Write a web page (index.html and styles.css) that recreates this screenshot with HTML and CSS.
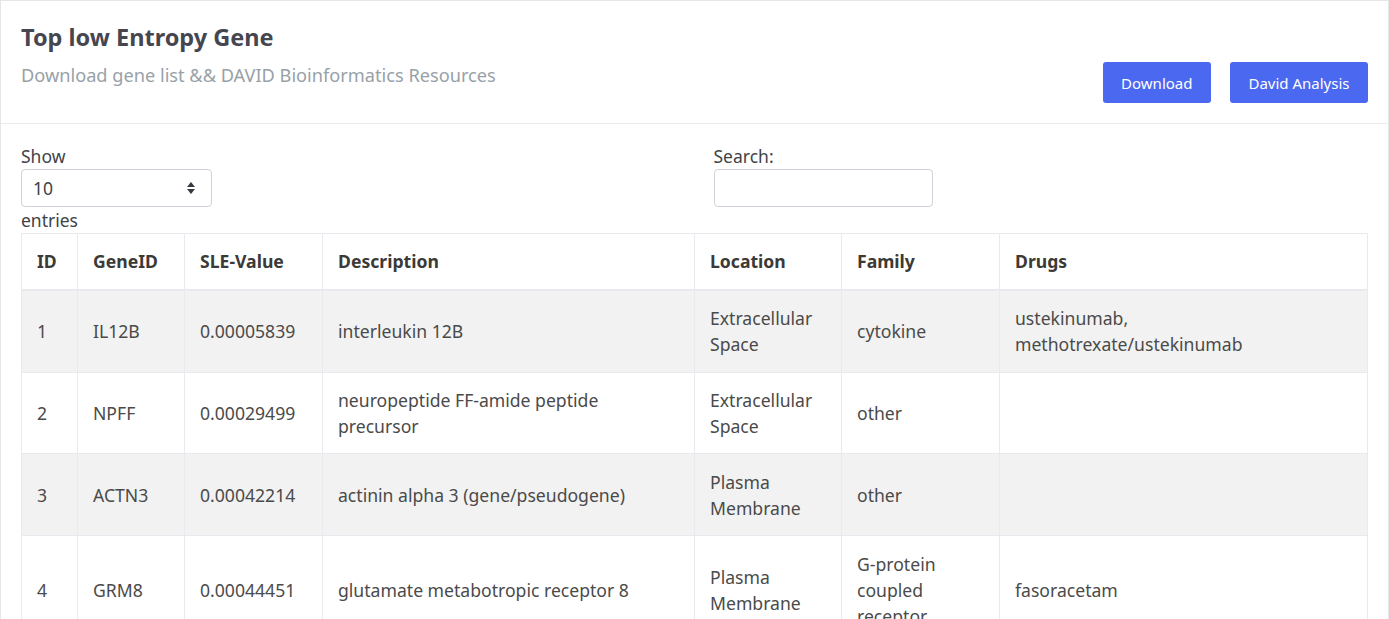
FILE: index.html
```html
<!DOCTYPE html>
<html lang="en">
<head>
    <meta charset="utf-8">
    <title>Top low Entropy Gene</title>
    <link rel="stylesheet" href="styles.css">
</head>
<body>
    <div class="card">
        <div class="card-header">
            <div class="card-titles">
                <h4 class="card-title">Top low Entropy Gene</h4>
                <p class="card-subtitle">Download gene list &amp;&amp; DAVID Bioinformatics Resources</p>
            </div>
            <div class="card-actions">
                <button class="btn" id="download">Download</button>
                <button class="btn" id="david">David Analysis</button>
            </div>
        </div>

        <div class="card-body">
            <div class="table-tools">
                <div class="tool">
                    <label>Show</label>
                    <div class="select-box">
                        <select id="pageSize">
                            <option>10</option>
                            <option>25</option>
                            <option>50</option>
                            <option>100</option>
                        </select>
                        <svg class="select-arrow" width="10" height="14" viewBox="0 0 10 14">
                            <path d="M5 1 L9 6 H1 Z" fill="#343a40"/>
                            <path d="M5 13 L9 8 H1 Z" fill="#343a40"/>
                        </svg>
                    </div>
                    <span>entries</span>
                </div>
                <div class="tool">
                    <label for="search">Search:</label>
                    <input type="search" id="search">
                </div>
            </div>

            <table class="gene-table">
                <colgroup>
                    <col style="width: 56px">
                    <col style="width: 107px">
                    <col style="width: 138px">
                    <col style="width: 372px">
                    <col style="width: 147px">
                    <col style="width: 158px">
                    <col>
                </colgroup>
                <thead>
                    <tr>
                        <th>ID</th>
                        <th>GeneID</th>
                        <th>SLE-Value</th>
                        <th>Description</th>
                        <th>Location</th>
                        <th>Family</th>
                        <th>Drugs</th>
                    </tr>
                </thead>
                <tbody id="geneRows"></tbody>
            </table>
        </div>
    </div>

    <script>
        const genes = [
            { id: 1, gene: 'IL12B', value: '0.00005839', desc: 'interleukin 12B', loc: 'Extracellular Space', family: 'cytokine', drugs: 'ustekinumab, methotrexate/ustekinumab' },
            { id: 2, gene: 'NPFF', value: '0.00029499', desc: 'neuropeptide FF-amide peptide precursor', loc: 'Extracellular Space', family: 'other', drugs: '' },
            { id: 3, gene: 'ACTN3', value: '0.00042214', desc: 'actinin alpha 3 (gene/pseudogene)', loc: 'Plasma Membrane', family: 'other', drugs: '' },
            { id: 4, gene: 'GRM8', value: '0.00044451', desc: 'glutamate metabotropic receptor 8', loc: 'Plasma Membrane', family: 'G-protein coupled receptor', drugs: 'fasoracetam' }
        ];

        const tbody = document.getElementById('geneRows');
        genes.forEach(function(g) {
            const tr = document.createElement('tr');
            [g.id, g.gene, g.value, g.desc, g.loc, g.family, g.drugs].forEach(function(v) {
                const td = document.createElement('td');
                td.textContent = v;
                tr.appendChild(td);
            });
            tbody.appendChild(tr);
        });
    </script>
</body>
</html>
```

FILE: styles.css
```css
body {
    margin: 0;
    font-family: "Noto Sans", "Open Sans", sans-serif;
    color: #495057;
    background-color: #ffffff;
}

.card {
    border: 1px solid #e6e6e6;
    border-bottom: none;
    background-color: #ffffff;
}

.card-header {
    display: flex;
    justify-content: space-between;
    align-items: flex-end;
    padding: 20px 20px 20px 20px;
    border-bottom: 1px solid #ebebeb;
}

.card-title {
    margin: 0;
    font-size: 23.5px;
    line-height: 32px;
    font-weight: 700;
    color: #464650;
}

.card-subtitle {
    margin: 9px 0 15px 0;
    font-size: 18.2px;
    line-height: 26px;
    color: #98a1a8;
}

.card-actions {
    display: flex;
    gap: 19px;
}

.btn {
    height: 41px;
    padding: 0 18.5px;
    font-family: inherit;
    font-size: 15px;
    color: #ffffff;
    background-color: #4b68f0;
    border: none;
    border-radius: 3px;
    cursor: pointer;
}

.btn:hover {
    background-color: #3f5bdc;
}

.card-body {
    padding: 19px 20px 0 20px;
}

.table-tools {
    display: grid;
    grid-template-columns: 1fr 1fr;
    column-gap: 38px;
    font-size: 17.5px;
    line-height: 26px;
    color: #3e4348;
}

.tool label,
.tool span {
    display: block;
}

.select-box {
    position: relative;
    width: 191px;
}

.select-box select {
    width: 100%;
    height: 38px;
    padding: 0 11px;
    font-family: inherit;
    font-size: 17.5px;
    color: #3e4348;
    background-color: #ffffff;
    border: 1px solid #ced4da;
    border-radius: 4px;
    appearance: none;
    -webkit-appearance: none;
}

.select-arrow {
    position: absolute;
    right: 16px;
    top: 12px;
    pointer-events: none;
}

.tool input {
    display: block;
    width: 219px;
    height: 38px;
    box-sizing: border-box;
    border: 1px solid #ced4da;
    border-radius: 4px;
}

.gene-table {
    width: 100%;
    table-layout: fixed;
    border-collapse: collapse;
    border: 1px solid #e9e9ef;
    font-size: 17.6px;
    line-height: 26px;
}

.gene-table th,
.gene-table td {
    padding: 14.4px 15px;
    border: 1px solid #e9e9ef;
    text-align: left;
    vertical-align: middle;
}

.gene-table th {
    font-weight: 700;
    color: #3b3a36;
    border-bottom-width: 2px;
}

.gene-table td {
    color: #4a4a4a;
}

.gene-table tbody tr:nth-child(odd) {
    background-color: #f2f2f2;
}
```
